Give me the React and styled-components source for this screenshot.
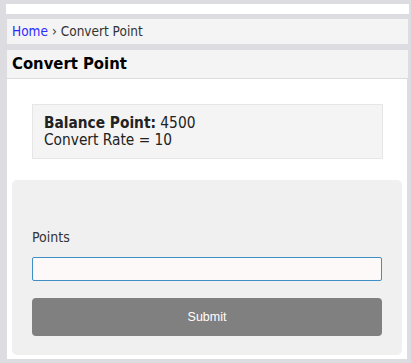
import React from "react";
import styled, { createGlobalStyle } from "styled-components";

const GlobalStyle = createGlobalStyle`
  html, body {
    margin: 0;
    padding: 0;
    background: #dcdce1;
  }
  body {
    font-family: "DejaVu Sans Condensed", "DejaVu Sans", Verdana, sans-serif;
    color: #222;
  }
`;

const Page = styled.div`
  padding: 4px 2px 3px 6px;
  min-height: 363px;
  box-sizing: border-box;
`;

const TopBar = styled.div`
  height: 10px;
  background: #fff;
  margin-bottom: 5px;
`;

const Inner = styled.div`
  margin: 0 1px 0 1px;
`;

const Breadcrumb = styled.div`
  height: 25px;
  line-height: 25px;
  background: #f4f4f4;
  padding-left: 5px;
  font-size: 13.5px;
  color: #333;
  margin-bottom: 6px;

  a {
    color: #2b2bff;
    text-decoration: none;
  }
  span {
    margin: 0 4px;
  }
`;

const Panel = styled.div`
  background: #fff;
  margin-right: 1px;
`;

const PanelTitle = styled.h2`
  margin: 0 -1px 0 0;
  height: 28px;
  line-height: 28px;
  padding-left: 5px;
  font-size: 16.5px;
  font-weight: bold;
  color: #000;
  background: #f4f4f4;
  border-bottom: 1px solid #dcdcdc;
`;

const PanelBody = styled.div`
  padding: 25px 5px 4px 5px;
`;

const InfoBox = styled.div`
  margin: 0 19px 21px 20px;
  padding: 10px 11px 9px;
  background: #f4f4f4;
  border: 1px solid #e6e6e6;
  font-size: 15.3px;
  line-height: 17px;
  color: #222;

  b {
    font-weight: bold;
  }
`;

const FormCard = styled.form`
  background: #f0f0f0;
  border-radius: 5px;
  padding: 49px 20px 19px;
`;

const Label = styled.label`
  display: block;
  font-size: 14px;
  line-height: 17px;
  color: #333;
  margin-bottom: 11px;
`;

const Input = styled.input`
  display: block;
  width: 100%;
  box-sizing: border-box;
  height: 24px;
  border: 1px solid #3d8fc6;
  border-radius: 2px;
  background: #fdf9f8;
  margin: 0 0 17px;
  outline: none;
`;

const Button = styled.button`
  display: block;
  width: 100%;
  height: 38px;
  border: none;
  border-radius: 4px;
  background: #808080;
  color: #fff;
  font-family: "Liberation Sans", Arial, sans-serif;
  font-size: 12.5px;
`;

export default function App() {
  return (
    <>
      <GlobalStyle />
      <Page>
        <TopBar />
        <Inner>
          <Breadcrumb>
            <a href="#">Home</a>
            <span>›</span>
            Convert Point
          </Breadcrumb>
          <Panel>
            <PanelTitle>Convert Point</PanelTitle>
            <PanelBody>
              <InfoBox>
                <b>Balance Point:</b> 4500
                <br />
                Convert Rate = 10
              </InfoBox>
              <FormCard onSubmit={(e) => e.preventDefault()}>
                <Label htmlFor="points">Points</Label>
                <Input id="points" type="text" />
                <Button type="submit">Submit</Button>
              </FormCard>
            </PanelBody>
          </Panel>
        </Inner>
      </Page>
    </>
  );
}
